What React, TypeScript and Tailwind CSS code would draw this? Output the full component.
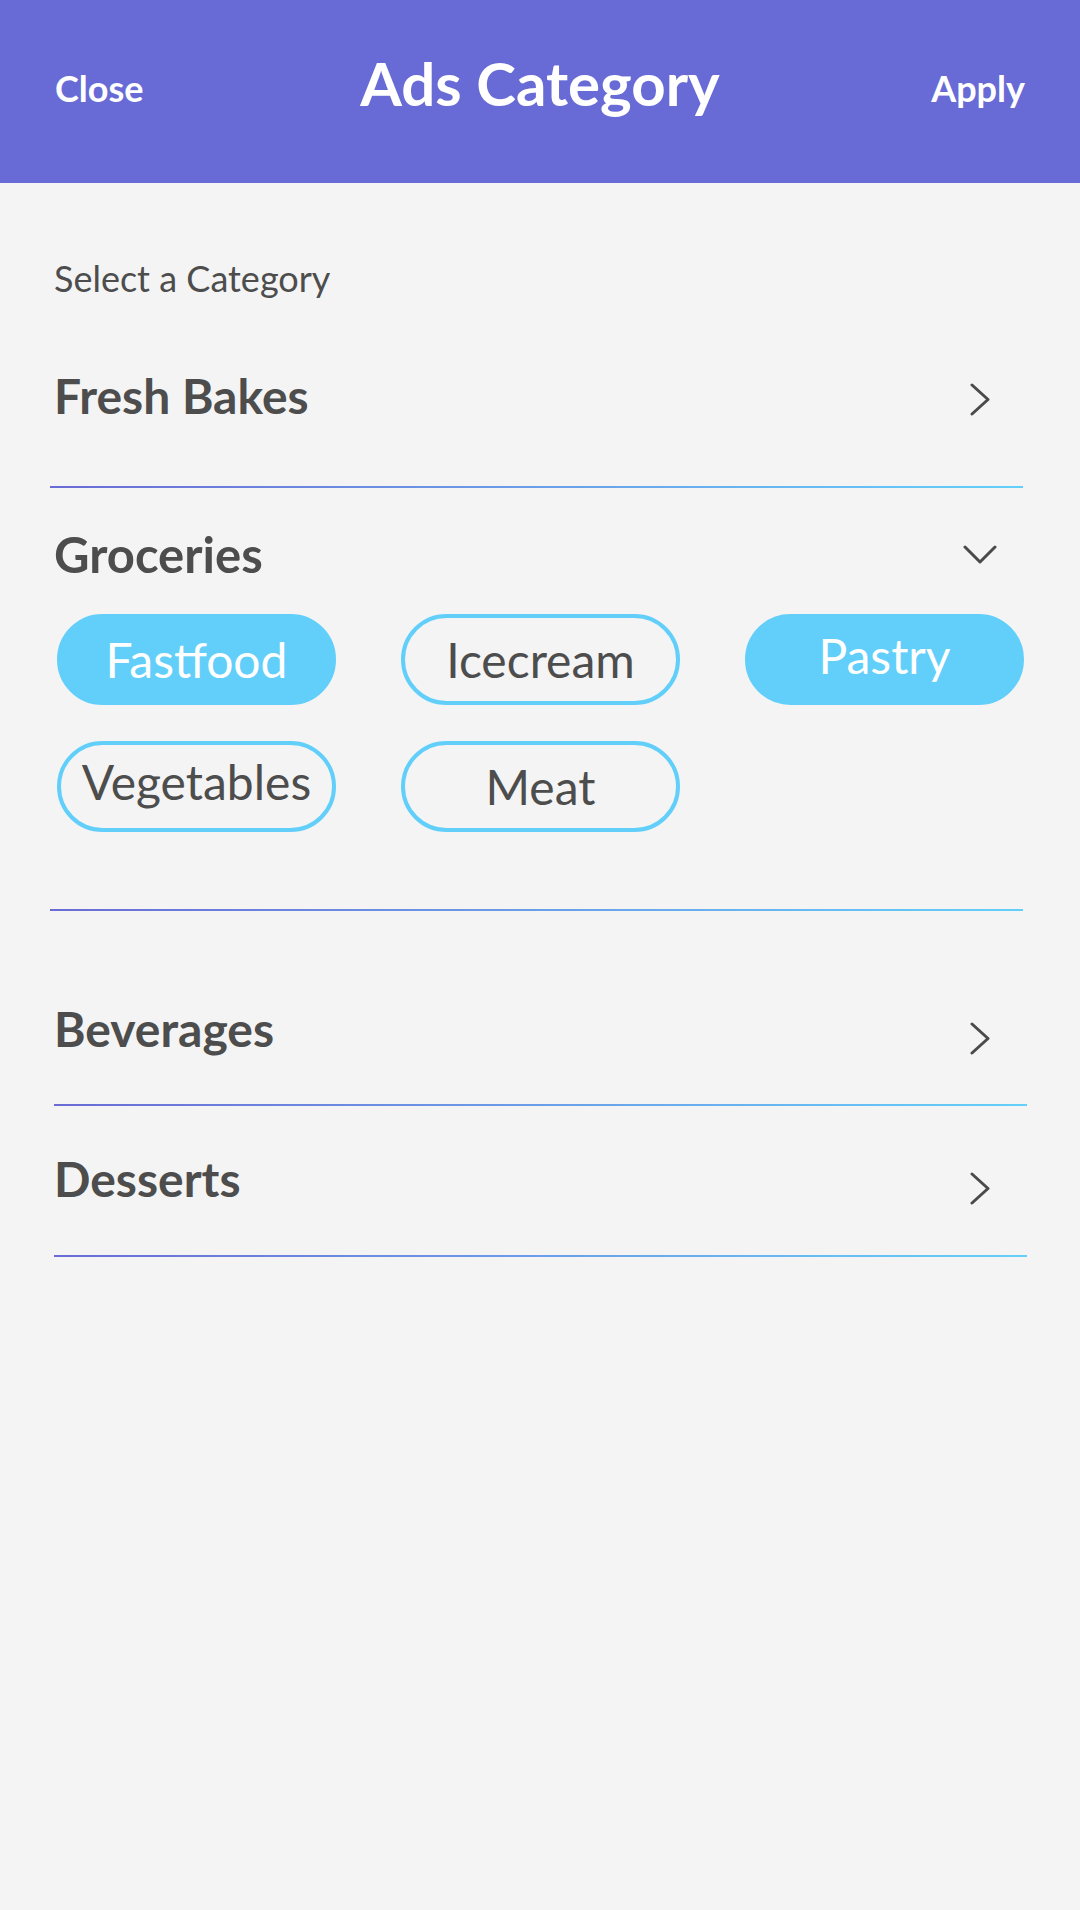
import React from "react"

const font = { fontFamily: "Lato, 'Open Sans', sans-serif" }

function ChevronRight({ className = "" }: { className?: string }) {
  return (
    <svg width="20" height="33" viewBox="0 0 20 33" fill="none" className={className}>
      <polyline points="2,2 18,16.5 2,31" stroke="#4a4a4a" strokeWidth="3" strokeLinecap="round" strokeLinejoin="round" />
    </svg>
  )
}

function ChevronDown({ className = "" }: { className?: string }) {
  return (
    <svg width="34" height="19" viewBox="0 0 34 19" fill="none" className={className}>
      <polyline points="2,2 17,17 32,2" stroke="#4a4a4a" strokeWidth="3" strokeLinecap="round" strokeLinejoin="round" />
    </svg>
  )
}

function Divider({ className = "" }: { className?: string }) {
  return <div className={"h-[2px] w-[973px] bg-gradient-to-r from-[#6a6bd6] to-[#62d0fa] " + className} />
}

const chips = [
  { label: "Fastfood", on: true, shift: "" },
  { label: "Icecream", on: false, shift: "" },
  { label: "Pastry", on: true, shift: "pb-[8px]" },
  { label: "Vegetables", on: false, shift: "pb-[9px]" },
  { label: "Meat", on: false, shift: "" },
]

export default function App() {
  return (
    <div className="min-h-[1910px] w-[1080px] bg-[#f4f4f4] text-[#4d4d4d]" style={font}>
      {/* Header */}
      <header className="grid h-[183px] grid-cols-[1fr_auto_1fr] items-start bg-[#686bd6] px-[55px] text-white">
        <button className="mt-[70px] justify-self-start text-[36px] font-bold leading-none">Close</button>
        <h1 className="mt-[53px] text-[60px] font-bold leading-none">Ads Category</h1>
        <button className="mt-[70px] justify-self-end text-[36px] font-bold leading-none">Apply</button>
      </header>

      <main className="px-[54px]">
        <p className="mt-[77px] text-[36px] leading-none">Select a Category</p>

        <div className="mt-[76px] flex items-start justify-between">
          <span className="text-[48px] font-bold leading-none">Fresh Bakes</span>
          <ChevronRight className="mr-[36px] mt-[11px]" />
        </div>
        <Divider className="mt-[66px] ml-[-4px]" />

        <div className="mt-[42px] flex items-start justify-between">
          <span className="text-[49px] font-bold leading-none">Groceries</span>
          <ChevronDown className="mr-[29px] mt-[15px]" />
        </div>

        <div className="mt-[35px] ml-[3px] grid grid-cols-[279px_279px_279px] gap-x-[65px] gap-y-[36px]">
          {chips.map((c) => (
            <div
              key={c.label}
              className={
                (c.on
                  ? "flex h-[91px] items-center justify-center rounded-full border-[4px] border-[#62cffa] bg-[#62cffa] text-[48px] leading-none text-white "
                  : "flex h-[91px] items-center justify-center rounded-full border-[4px] border-[#62cffa] text-[48px] leading-none text-[#4d4d4d] ") +
                c.shift
              }
            >
              {c.label}
            </div>
          ))}
        </div>
        <Divider className="mt-[77px] ml-[-4px]" />

        <div className="mt-[94px] flex items-start justify-between">
          <span className="text-[48px] font-bold leading-none">Beverages</span>
          <ChevronRight className="mr-[36px] mt-[17px]" />
        </div>
        <Divider className="mt-[49px]" />

        <div className="mt-[49px] flex items-start justify-between">
          <span className="text-[48px] font-bold leading-none">Desserts</span>
          <ChevronRight className="mr-[36px] mt-[17px]" />
        </div>
        <Divider className="mt-[50px]" />
      </main>
    </div>
  )
}
